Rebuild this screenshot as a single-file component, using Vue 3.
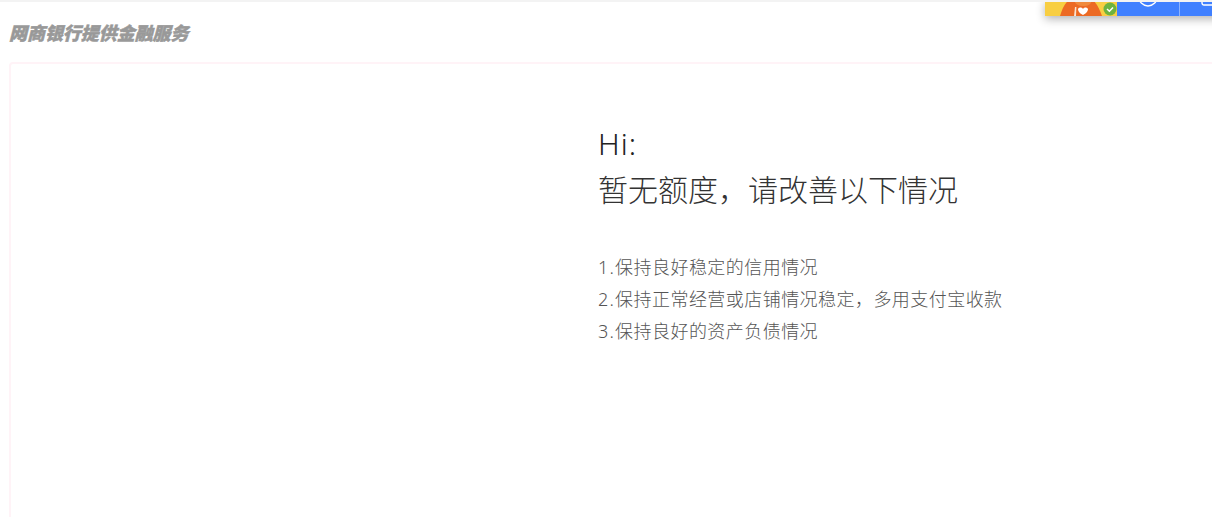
<script setup>
const tips = [
  { num: '1.', text: '保持良好稳定的信用情况' },
  { num: '2.', text: '保持正常经营或店铺情况稳定，多用支付宝收款' },
  { num: '3.', text: '保持良好的资产负债情况' }
]
</script>

<template>
  <div class="page">
    <div class="float-bar">
      <div class="avatar">
        <svg class="mascot" width="72" height="16" viewBox="0 0 72 16">
          <path d="M15 16 C17 9 20 3 24 0 L48 0 C52 4 55 10 57 16 Z" fill="#ec6a24" />
          <path d="M29 0 L47 0 C46 4 44 6 38 6 C33 6 30 4 29 0 Z" fill="#f08a3c" />
          <path d="M29 16 L30 7 L31.4 7 L31 16 Z" fill="#fbe3d0" />
          <path d="M33 9 C34 7 37 7 38 9 C39 7 42 7 43 9 C43 12 40 14 38 15 C36 14 33 12 33 9 Z" fill="#fff" />
          <circle cx="65" cy="9" r="6.5" fill="#6db33f" />
          <path d="M62 9 L64.4 11.2 L68 7.4" fill="none" stroke="#fff" stroke-width="1.5" />
        </svg>
      </div>
      <div class="action action-first">
        <svg width="20" height="16" viewBox="0 0 20 16">
          <circle cx="10" cy="-3" r="9" fill="none" stroke="#fff" stroke-width="1.4" />
        </svg>
      </div>
      <div class="action">
        <svg width="20" height="16" viewBox="0 0 20 16">
          <rect x="1" y="-7" width="14" height="12" rx="2" fill="none" stroke="#fff" stroke-width="1.4" />
        </svg>
      </div>
    </div>

    <h1 class="title">网商银行提供金融服务</h1>

    <section class="card">
      <div class="content">
        <h2 class="heading"><span class="hi">Hi:</span><br />暂无额度，请改善以下情况</h2>
        <ul class="tips">
          <li v-for="tip in tips" :key="tip.num"><span class="num">{{ tip.num }}</span>{{ tip.text }}</li>
        </ul>
      </div>
    </section>
  </div>
</template>

<style>
html, body {
  margin: 0;
  background: #fff;
  overflow: hidden;
}
</style>

<style scoped>
.page {
  position: relative;
  width: 1212px;
  height: 517px;
  overflow: hidden;
  box-sizing: border-box;
  border-top: 2px solid #f3f3f3;
  font-family: "Noto Sans", "Noto Sans CJK SC", sans-serif;
}
.float-bar {
  position: absolute;
  top: -2px;
  left: 1045px;
  width: 180px;
  height: 16px;
  display: flex;
  background: #4080ff;
  box-shadow: 0 3px 10px rgba(0, 0, 0, 0.3);
}
.avatar {
  width: 72px;
  height: 16px;
  background: #f8ce42;
}
.mascot {
  display: block;
}
.action {
  width: 62px;
  height: 16px;
  display: flex;
  justify-content: center;
  flex-shrink: 0;
}
.action-first {
  border-right: 1px solid rgba(255, 255, 255, 0.4);
}
.title {
  margin: 0;
  padding: 21px 0 0 9px;
  height: 40px;
  box-sizing: border-box;
  font-size: 18px;
  line-height: 21px;
  font-weight: 900;
  font-style: italic;
  letter-spacing: -0.05px;
  color: #999;
  -webkit-text-stroke: 0.5px #999;
}
.card {
  margin: 20px 0 0 9px;
  width: 1300px;
  height: 500px;
  box-sizing: border-box;
  border: 2px solid #fff3f7;
  border-radius: 4px;
  padding: 57px 0 0 587px;
}
.heading {
  margin: 0;
  font-size: 30px;
  line-height: 46px;
  font-weight: 300;
  color: #333;
}
.hi {
  letter-spacing: 1px;
  color: #222;
}
.tips {
  margin: 38px 0 0;
  padding: 0;
  list-style: none;
  font-size: 18px;
  line-height: 32px;
  letter-spacing: 0.45px;
  font-weight: 300;
  color: #555;
}
.num {
  letter-spacing: 1.2px;
}
</style>
